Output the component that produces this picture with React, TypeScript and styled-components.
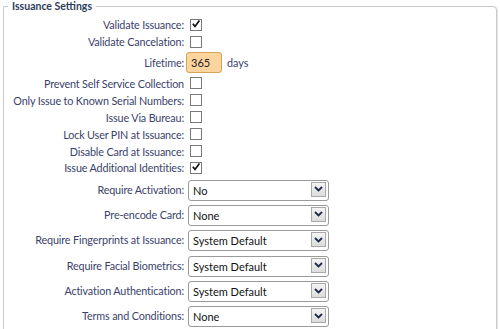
import React from "react";
import styled, { createGlobalStyle } from "styled-components";

const GlobalStyle = createGlobalStyle`
    body {
        margin: 0;
        background: #ffffff;
        font-family: Lato, "Open Sans", sans-serif;
    }
`;

type CheckRow = { label: string; checked?: boolean; colon?: boolean };
type SelectRow = { label: string; value: string };

const checksTop: CheckRow[] = [
    { label: "Validate Issuance", checked: true },
    { label: "Validate Cancelation" },
];

const checksBottom: CheckRow[] = [
    { label: "Prevent Self Service Collection", colon: false },
    { label: "Only Issue to Known Serial Numbers" },
    { label: "Issue Via Bureau" },
    { label: "Lock User PIN at Issuance" },
    { label: "Disable Card at Issuance" },
    { label: "Issue Additional Identities", checked: true },
];

const selects: SelectRow[] = [
    { label: "Require Activation", value: "No" },
    { label: "Pre-encode Card", value: "None" },
    { label: "Require Fingerprints at Issuance", value: "System Default" },
    { label: "Require Facial Biometrics", value: "System Default" },
    { label: "Activation Authentication", value: "System Default" },
    { label: "Terms and Conditions", value: "None" },
];

export default function App() {
    return (
        <>
            <GlobalStyle />
            <Page>
                <Fieldset>
                    <Legend>Issuance Settings</Legend>
                    <Form>
                        {checksTop.map((c) => (
                            <Row key={c.label} $h={17}>
                                <Label>{c.label}:</Label>
                                <Box $checked={c.checked}>{c.checked && <Tick />}</Box>
                            </Row>
                        ))}
                        <Row $h={25}>
                            <Label>Lifetime:</Label>
                            <Control>
                                <NumberInput defaultValue="365" />
                                <Unit>days</Unit>
                            </Control>
                        </Row>
                        {checksBottom.map((c) => (
                            <Row key={c.label} $h={16.9}>
                                <Label>
                                    {c.label}
                                    {c.colon === false ? "" : ":"}
                                </Label>
                                <Box $checked={c.checked}>{c.checked && <Tick />}</Box>
                            </Row>
                        ))}
                        <SelectGroup>
                            {selects.map((s) => (
                                <Row key={s.label} $h={25.4}>
                                    <Label>{s.label}:</Label>
                                    <SelectWrap>
                                        <Select defaultValue={s.value}>
                                            <option>{s.value}</option>
                                        </Select>
                                        <Arrow>
                                            <svg width="9" height="6" viewBox="0 0 9 6">
                                                <path
                                                    d="M1 1 L4.5 4.5 L8 1"
                                                    fill="none"
                                                    stroke="#1d2a4a"
                                                    strokeWidth="1.8"
                                                />
                                            </svg>
                                        </Arrow>
                                    </SelectWrap>
                                </Row>
                            ))}
                        </SelectGroup>
                    </Form>
                </Fieldset>
            </Page>
        </>
    );
}

function Tick() {
    return (
        <svg width="10" height="10" viewBox="0 0 10 10">
            <path d="M1.8 4.8 L4 7.4 L8.4 1.6" fill="none" stroke="#111" strokeWidth="1.7" />
        </svg>
    );
}

const Page = styled.div`
    width: 500px;
    height: 329px;
    overflow: hidden;
    padding: 0 3px 0 3px;
    box-sizing: border-box;
`;

const Fieldset = styled.fieldset`
    margin: 0;
    padding: 4px 0 40px 0;
    border: 1px solid #c9c9c9;
    border-radius: 0 4px 0 0;
    box-shadow: 1px 0 0 #e6e6e6;
    min-height: 360px;
    box-sizing: border-box;
`;

const Legend = styled.legend`
    margin-left: 4px;
    padding: 0 4px;
    font-size: 10.5px;
    font-weight: 700;
    color: #2c3d5c;
`;

const Form = styled.div`
    display: flex;
    flex-direction: column;
`;

const SelectGroup = styled.div`
    display: flex;
    flex-direction: column;
`;

const Row = styled.div<{ $h: number }>`
    display: grid;
    grid-template-columns: 183px 1fr;
    align-items: center;
    height: ${(p) => p.$h}px;
`;

const Label = styled.span`
    text-align: right;
    font-size: 10.8px;
    letter-spacing: -0.15px;
    color: #3b3f6b;
    white-space: nowrap;
    padding-right: 3px;
`;

const Box = styled.span<{ $checked?: boolean }>`
    width: 10px;
    height: 10px;
    border: 1px solid #7a7a7a;
    background: #fff;
    margin-left: 3px;
    display: flex;
    align-items: center;
    justify-content: center;
    svg {
        margin-top: -1px;
    }
`;

const Control = styled.div`
    display: flex;
    align-items: center;
    gap: 5px;
    margin-left: -1px;
`;

const NumberInput = styled.input`
    width: 36px;
    height: 21px;
    box-sizing: border-box;
    border: 1px solid #d4a35e;
    border-radius: 3px;
    background: #fcd49e;
    font-family: Lato, "Open Sans", sans-serif;
    font-size: 11px;
    color: #222;
    padding: 0 4px;
    outline: none;
`;

const Unit = styled.span`
    font-size: 10.8px;
    color: #3b3f6b;
`;

const SelectWrap = styled.div`
    position: relative;
    width: 141px;
    height: 21px;
    margin-left: 1px;
`;

const Select = styled.select`
    appearance: none;
    width: 100%;
    height: 100%;
    box-sizing: border-box;
    border: 1px solid #9a9a9a;
    border-radius: 3px;
    background: #fff;
    font-family: Lato, "Open Sans", sans-serif;
    font-size: 11px;
    color: #111;
    padding: 0 4px;
    outline: none;
`;

const Arrow = styled.span`
    position: absolute;
    right: 3px;
    top: 3px;
    width: 15px;
    height: 15px;
    box-sizing: border-box;
    border: 1px solid #a9a9a9;
    background: linear-gradient(#f4f4f4, #dcdcdc);
    display: flex;
    align-items: center;
    justify-content: center;
    pointer-events: none;
`;
